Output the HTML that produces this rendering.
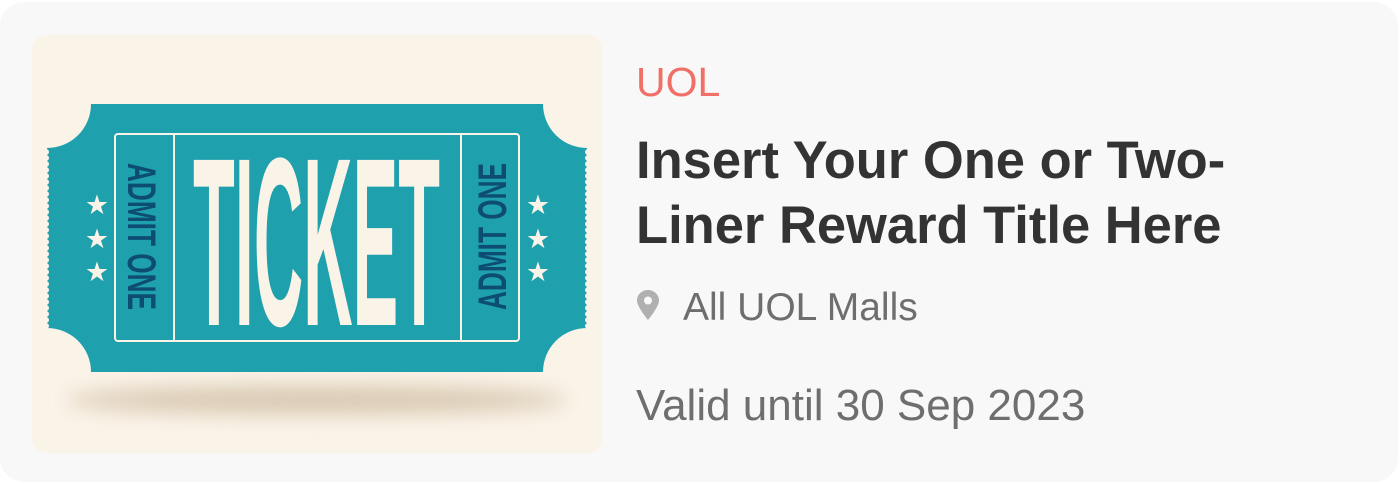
<!DOCTYPE html>
<html><head><style>
body{margin:0;background:#fff;width:1400px;height:484px;overflow:hidden;font-family:"Liberation Sans",sans-serif}
.card{position:absolute;left:0;top:2px;width:1398px;height:480px;background:#f8f8f8;border-radius:24px}
.img{position:absolute;left:32px;top:35px;width:570px;height:418px;background:#faf3e8;border-radius:14px;overflow:hidden}
.t{position:absolute;left:636px;white-space:nowrap;line-height:normal}
</style></head><body>
<div class="card"></div>
<div class="img">
<svg width="570" height="418" viewBox="32 35 570 418">
<defs><filter id="b" x="-50%" y="-200%" width="200%" height="500%"><feGaussianBlur stdDeviation="10"/></filter></defs>
<ellipse cx="317" cy="400" rx="250" ry="14" fill="#d8c8b0" filter="url(#b)"/>
<path d="M91,104 H543 A44,44 0 0 0 587,148 V328 A44,44 0 0 0 543,372 H91 A44,44 0 0 0 47,328 V148 A44,44 0 0 0 91,104 Z" fill="#1fa0ad"/>
<g fill="#faf3e8">
<circle cx="46" cy="152" r="3"/><circle cx="46" cy="158" r="3"/><circle cx="46" cy="164" r="3"/><circle cx="46" cy="170" r="3"/><circle cx="46" cy="176" r="3"/><circle cx="46" cy="182" r="3"/><circle cx="46" cy="188" r="3"/><circle cx="46" cy="194" r="3"/><circle cx="46" cy="200" r="3"/><circle cx="46" cy="206" r="3"/><circle cx="46" cy="212" r="3"/><circle cx="46" cy="218" r="3"/><circle cx="46" cy="224" r="3"/><circle cx="46" cy="230" r="3"/><circle cx="46" cy="236" r="3"/><circle cx="46" cy="242" r="3"/><circle cx="46" cy="248" r="3"/><circle cx="46" cy="254" r="3"/><circle cx="46" cy="260" r="3"/><circle cx="46" cy="266" r="3"/><circle cx="46" cy="272" r="3"/><circle cx="46" cy="278" r="3"/><circle cx="46" cy="284" r="3"/><circle cx="46" cy="290" r="3"/><circle cx="46" cy="296" r="3"/><circle cx="46" cy="302" r="3"/><circle cx="46" cy="308" r="3"/><circle cx="46" cy="314" r="3"/><circle cx="46" cy="320" r="3"/><circle cx="46" cy="326" r="3"/>
<circle cx="588" cy="152" r="3"/><circle cx="588" cy="158" r="3"/><circle cx="588" cy="164" r="3"/><circle cx="588" cy="170" r="3"/><circle cx="588" cy="176" r="3"/><circle cx="588" cy="182" r="3"/><circle cx="588" cy="188" r="3"/><circle cx="588" cy="194" r="3"/><circle cx="588" cy="200" r="3"/><circle cx="588" cy="206" r="3"/><circle cx="588" cy="212" r="3"/><circle cx="588" cy="218" r="3"/><circle cx="588" cy="224" r="3"/><circle cx="588" cy="230" r="3"/><circle cx="588" cy="236" r="3"/><circle cx="588" cy="242" r="3"/><circle cx="588" cy="248" r="3"/><circle cx="588" cy="254" r="3"/><circle cx="588" cy="260" r="3"/><circle cx="588" cy="266" r="3"/><circle cx="588" cy="272" r="3"/><circle cx="588" cy="278" r="3"/><circle cx="588" cy="284" r="3"/><circle cx="588" cy="290" r="3"/><circle cx="588" cy="296" r="3"/><circle cx="588" cy="302" r="3"/><circle cx="588" cy="308" r="3"/><circle cx="588" cy="314" r="3"/><circle cx="588" cy="320" r="3"/><circle cx="588" cy="326" r="3"/>
</g>
<rect x="115" y="134" width="404" height="207" rx="3" fill="none" stroke="#faf3e8" stroke-width="2"/>
<line x1="174" y1="134" x2="174" y2="341" stroke="#faf3e8" stroke-width="2"/>
<line x1="461" y1="134" x2="461" y2="341" stroke="#faf3e8" stroke-width="2"/>
<text x="193" y="325" font-size="240" font-weight="bold" fill="#faf3e8" font-family="Liberation Sans" textLength="247" lengthAdjust="spacingAndGlyphs">TICKET</text>
<text transform="translate(128,163) rotate(90)" font-size="40" font-weight="bold" fill="#0d4d74" textLength="147" lengthAdjust="spacingAndGlyphs">ADMIT ONE</text>
<text transform="translate(506,310) rotate(-90)" font-size="40" font-weight="bold" fill="#0d4d74" textLength="147" lengthAdjust="spacingAndGlyphs">ADMIT ONE</text>
<g fill="#faf3e8" font-size="27" text-anchor="middle">
<text x="97" y="214">★</text><text x="97" y="248">★</text><text x="97" y="281">★</text>
<text x="538" y="214">★</text><text x="538" y="248">★</text><text x="538" y="281">★</text>
</g>
</svg>
</div>
<div class="t" style="top:59px;font-size:41px;color:#f07067">UOL</div>
<div class="t" style="top:128px;font-size:52.5px;font-weight:bold;color:#333;line-height:65px">Insert Your One or Two-<br>Liner Reward Title Here</div>
<svg style="position:absolute;left:636px;top:289px" width="24" height="32" viewBox="0 0 24 32"><path d="M12,1 C5.5,1 1,6 1,11.5 C1,18 12,31 12,31 C12,31 23,18 23,11.5 C23,6 18.5,1 12,1 Z M12,7.5 A4,4 0 1 1 12,15.5 A4,4 0 1 1 12,7.5 Z" fill="#b0b0b0" fill-rule="evenodd"/></svg>
<div class="t" style="left:683px;top:286px;font-size:39px;color:#6e6e6e">All UOL Malls</div>
<div class="t" style="top:381px;font-size:44px;color:#6e6e6e">Valid until 30 Sep 2023</div>
</body></html>
